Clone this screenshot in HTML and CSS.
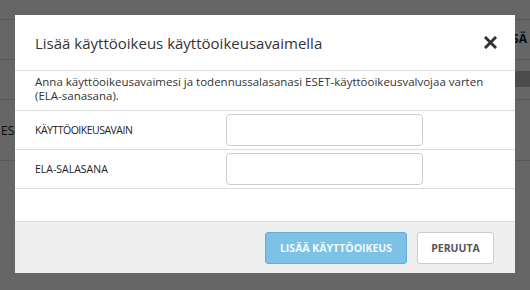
FILE: index.html
```html
<!DOCTYPE html>
<html lang="fi">
<head>
<meta charset="utf-8">
<title>Lisää käyttöoikeus</title>
<link rel="stylesheet" href="styles.css">
</head>
<body>
<div class="page">
  <div class="bg-top"></div>
  <div class="bg-row"><span></span><span class="bg-action">LISÄ</span></div>
  <div class="bg-row bg-row-band"><span></span><span class="bg-band"></span></div>
  <div class="bg-row bg-row-text"><span class="bg-text">ESET</span></div>
  <div class="bg-rest"></div>
</div>
<div class="overlay"></div>
<div class="modal">
  <div class="modal-header">
    <h1 class="modal-title">Lisää käyttöoikeus käyttöoikeusavaimella</h1>
    <button class="modal-close" aria-label="Sulje">
      <svg width="13" height="13" viewBox="0 0 13 13"><path d="M2 2 L11 11 M11 2 L2 11" stroke="#333" stroke-width="3" stroke-linecap="square"/></svg>
    </button>
  </div>
  <p class="modal-desc">Anna käyttöoikeusavaimesi ja todennussalasanasi ESET-käyttöoikeusvalvojaa varten (ELA-sanasana).</p>
  <div class="form-row">
    <label class="form-label form-label-tight">KÄYTTÖOIKEUSAVAIN</label>
    <input class="form-input" type="text">
  </div>
  <div class="form-row">
    <label class="form-label">ELA-SALASANA</label>
    <input class="form-input" type="password">
  </div>
  <div class="modal-spacer"></div>
  <div class="modal-footer">
    <button class="btn btn-primary">LISÄÄ KÄYTTÖOIKEUS</button>
    <button class="btn btn-default">PERUUTA</button>
  </div>
</div>
</body>
</html>
```
FILE: styles.css
```css
html, body {
  margin: 0;
  padding: 0;
  width: 530px;
  height: 290px;
  overflow: hidden;
  font-family: "Open Sans", "Liberation Sans", sans-serif;
  color: #333;
}
.page {
  background: #fff;
  height: 290px;
}
.bg-top {
  height: 20px;
  border-bottom: 1px solid #ddd;
  box-sizing: border-box;
}
.bg-row {
  height: 39px;
  border-bottom: 1px solid #ddd;
  display: flex;
  justify-content: space-between;
  align-items: center;
}
.bg-action {
  font-size: 12px;
  font-weight: bold;
  color: #222;
  padding-right: 3px;
  margin-top: -2px;
}
.bg-row-band {
  align-items: flex-start;
}
.bg-band {
  width: 15px;
  height: 16px;
  margin-top: 11px;
  background: #bbb;
}
.bg-row-text {
  height: 60px;
  align-items: center;
}
.bg-text {
  font-size: 12px;
  color: #222;
  padding-left: 1px;
}
.overlay {
  position: absolute;
  inset: 0;
  background: rgba(0, 0, 0, 0.6);
}
.modal {
  position: absolute;
  left: 15px;
  top: 15px;
  width: 500px;
  height: 258px;
  background: #fff;
  display: flex;
  flex-direction: column;
}
.modal-header {
  height: 56px;
  border-bottom: 1px solid #ddd;
  display: flex;
  align-items: center;
  justify-content: space-between;
  padding: 0 18px 0 20px;
  box-sizing: border-box;
}
.modal-title {
  margin: 0;
  font-size: 15px;
  font-weight: normal;
  color: #333;
}
.modal-close {
  border: 0;
  background: none;
  padding: 0;
  width: 13px;
  height: 13px;
  display: flex;
}
.modal-desc {
  margin: 0;
  padding: 4px 20px 7px 20px;
  font-size: 11.5px;
  line-height: 14px;
  border-bottom: 1px solid #ddd;
}
.form-row {
  display: flex;
  align-items: center;
  justify-content: space-between;
  padding: 3px 92px 3px 20px;
  border-bottom: 1px solid #ddd;
}
.form-label {
  font-size: 10.5px;
  color: #222;
}
.form-label-tight {
  letter-spacing: -0.5px;
}
.form-input {
  width: 197px;
  height: 32px;
  box-sizing: border-box;
  border: 1px solid #ccc;
  border-radius: 4px;
  margin: 0;
}
.modal-spacer {
  flex: 1;
}
.modal-footer {
  height: 52px;
  box-sizing: border-box;
  background: #eee;
  border-top: 1px solid #ddd;
  display: flex;
  justify-content: flex-end;
  align-items: center;
  gap: 10px;
  padding: 0 21px 0 0;
}
.btn {
  height: 32px;
  border-radius: 3px;
  font-family: "Open Sans", "Liberation Sans", sans-serif;
  font-size: 10.5px;
  font-weight: bold;
  padding: 0;
  box-sizing: border-box;
}
.btn-primary {
  width: 142px;
  background: #7cc2e6;
  border: 1px solid #69aed6;
  color: #f4f9fc;
}
.btn-default {
  width: 77px;
  background: #fff;
  border: 1px solid #ccc;
  color: #555;
}
```
